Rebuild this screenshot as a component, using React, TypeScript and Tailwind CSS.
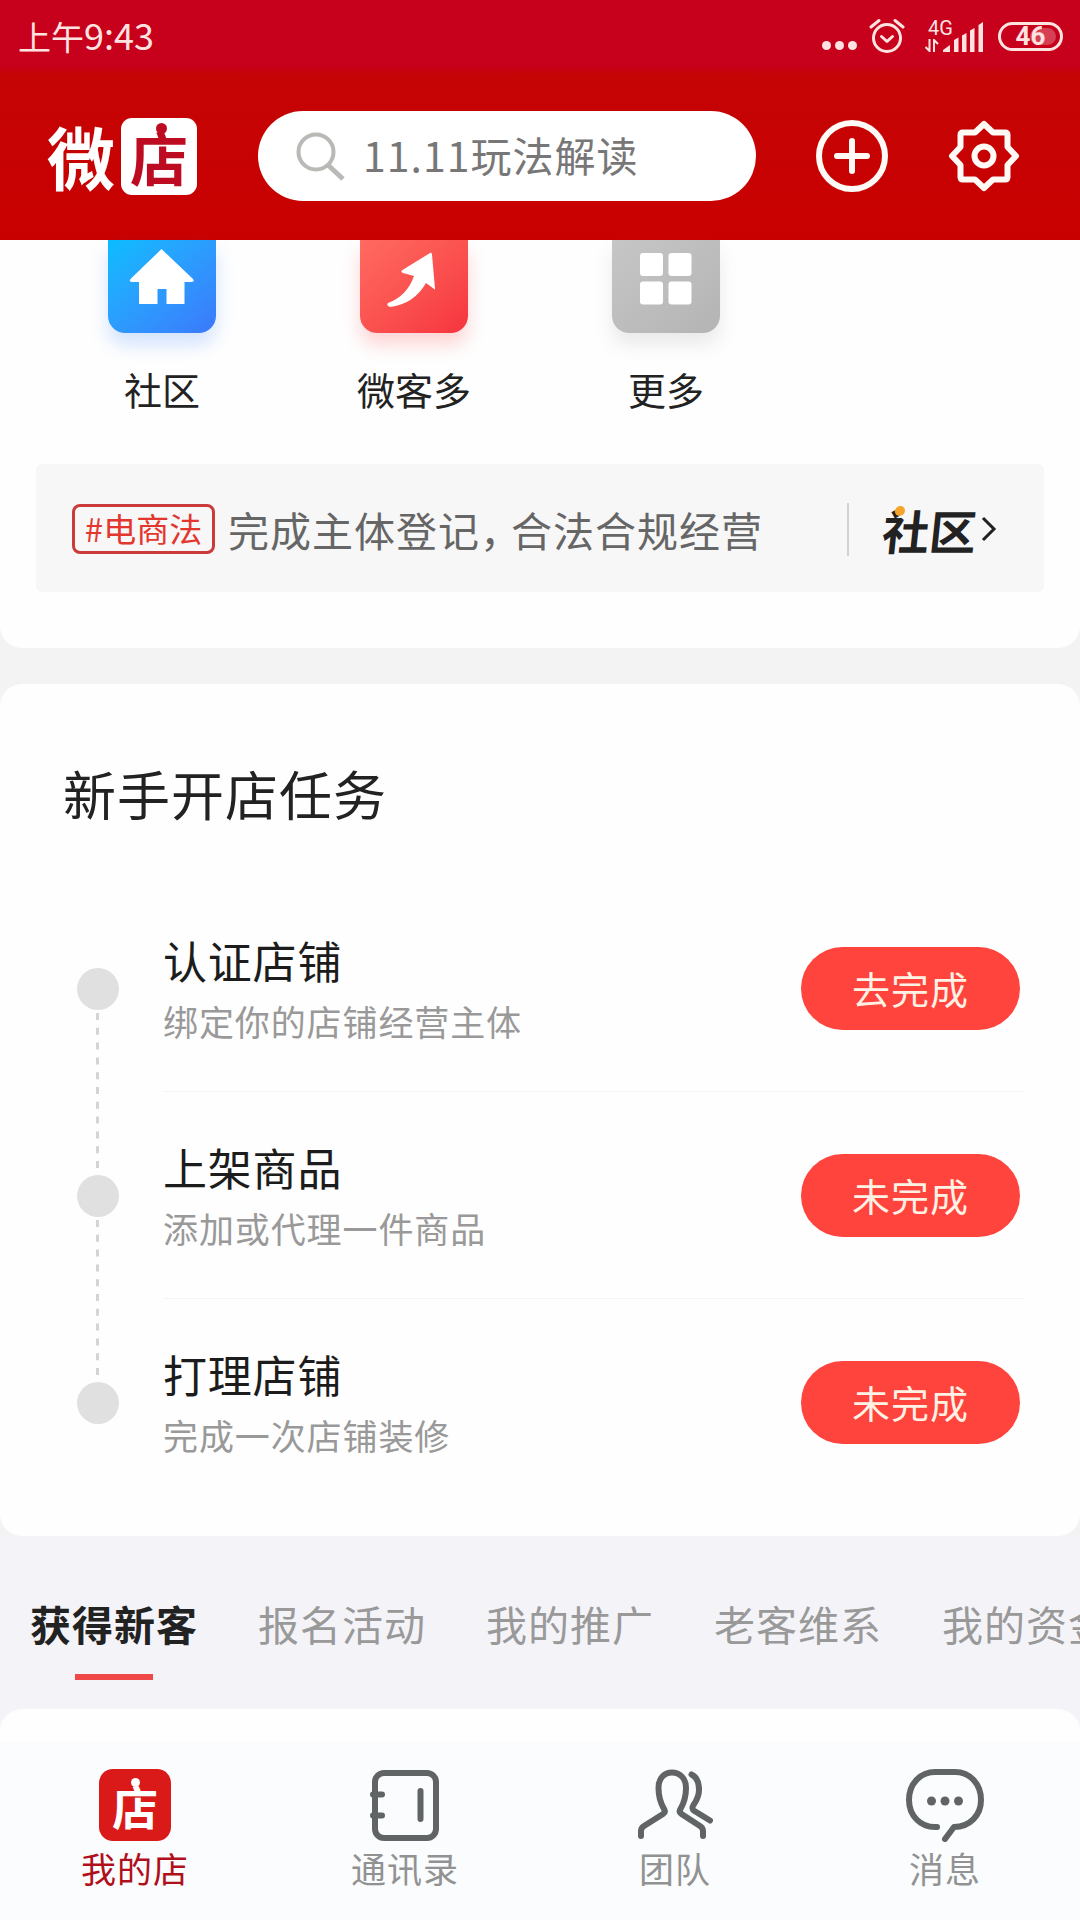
import type { ReactNode } from 'react';
import { clsx } from 'clsx';

interface Task {
  title: string;
  desc: string;
  action: string;
}

const tasks: Task[] = [
  { title: '认证店铺', desc: '绑定你的店铺经营主体', action: '去完成' },
  { title: '上架商品', desc: '添加或代理一件商品', action: '未完成' },
  { title: '打理店铺', desc: '完成一次店铺装修', action: '未完成' },
];

const tabs = ['获得新客', '报名活动', '我的推广', '老客维系', '我的资金'];

function AlarmIcon() {
  return (
    <svg width="36" height="36" viewBox="0 0 36 36" fill="none" stroke="currentColor" strokeWidth="3" strokeLinecap="round" strokeLinejoin="round">
      <circle cx="18" cy="20" r="13.5" />
      <path d="M12.5 18.5l5.5 5 5.5-5" />
      <path d="M2 9l8-6.5M34 9l-8-6.5" />
    </svg>
  );
}

function SignalIcon() {
  return (
    <svg width="40" height="30" viewBox="0 0 40 30" fill="currentColor">
      <path d="M0 30v-2l7-5v7zM11 30V18l4.5-2.5V30zM19 30V13.5l4.5-2.5v19zM27 30V8.5L31.5 6v24zM35.5 30V3L40 0v30z" />
    </svg>
  );
}

function StatusBar() {
  return (
    <div className="flex h-[72px] items-center justify-between pl-[18px] pr-[17px] text-[#ffe3e0]">
      <div className="flex items-baseline pb-[3px] leading-none">
        <span className="text-[33px]">上午</span>
        <span className="text-[36px]">9:43</span>
      </div>
      <div className="flex items-center">
        <div className="mt-[19px] flex gap-[4px]">
          <span className="size-[9px] rounded-full bg-current" />
          <span className="size-[9px] rounded-full bg-current" />
          <span className="size-[9px] rounded-full bg-current" />
        </div>
        <div className="ml-[12px]">
          <AlarmIcon />
        </div>
        <div className="ml-[20px] flex items-end">
          <div className="flex w-[18px] flex-col">
            <span className="h-[18px] pl-[3px] font-['Roboto',sans-serif] text-[20px] leading-[15px]">4G</span>
            <svg width="14" height="13" viewBox="0 0 14 13" fill="none" stroke="currentColor" strokeWidth="2">
              <path d="M4.5 0v12L.5 8M9 13V1l4 4" />
            </svg>
          </div>
          <SignalIcon />
        </div>
        <div className="relative ml-[15px] flex h-[29px] w-[65px] items-center justify-center overflow-hidden rounded-full border-[3px] border-current">
          <span className="absolute inset-y-[3px] right-[4px] w-[26px] rounded-full bg-white/25" />
          <span className="relative font-['Roboto',sans-serif] text-[26px] font-bold leading-none">46</span>
        </div>
      </div>
    </div>
  );
}

function Header() {
  return (
    <header className="h-[240px] shrink-0 bg-linear-to-b from-[#c7001c] from-[27%] via-[#c50405] via-[31%] to-[#c90000]">
      <StatusBar />
      <div className="flex h-[168px] items-center">
        <div className="ml-[47px] flex items-center text-white">
          <span className="w-[74px] text-[68px] font-bold leading-[76px]">微</span>
          <span className="relative flex h-[77px] w-[76px] items-center justify-center rounded-[11px] bg-white text-[58px] font-bold leading-[70px] text-[#bd0c22]">
            店
            <span className="absolute left-[35px] top-[5px] size-[11px] rounded-full bg-[#bd0c22]" />
          </span>
        </div>
        <div className="ml-[61px] flex h-[90px] w-[498px] items-center rounded-full bg-white pl-[37px]">
          <svg width="52" height="52" viewBox="0 0 52 52" fill="none" stroke="#b9b9b6" strokeWidth="4">
            <circle cx="21" cy="22" r="17.5" />
            <path d="M33.5 35.5L48 49" strokeWidth="5" />
          </svg>
          <span className="ml-[16px] pb-[4px] text-[41px] leading-none tracking-[1px] text-[#777]">11.11玩法解读</span>
        </div>
        <svg className="ml-[60px]" width="72" height="72" viewBox="0 0 72 72" fill="none" stroke="#fffaf5" strokeWidth="6" strokeLinecap="round">
          <circle cx="36" cy="36" r="33" />
          <path d="M36 21v30M21 36h30" />
        </svg>
        <svg className="ml-[60px]" width="72" height="72" viewBox="0 0 72 72" fill="none" stroke="#fffaf5" strokeWidth="6" strokeLinejoin="round">
          <path d="M36 4l9 8.500h12q2.500 0 2.500 2.500v12L68 36l-8.500 9v12q0 2.500-2.500 2.500H45L36 68l-9-8.500H15q-2.500 0-2.500-2.500V45L4 36l8.500-9V15q0-2.500 2.500-2.500h12z" />
          <circle cx="36" cy="36" r="9.5" />
        </svg>
      </div>
    </header>
  );
}

function Shortcut({ label, tile, children }: { label: string; tile: string; children: ReactNode }) {
  return (
    <div className="flex w-[252px] flex-col items-center">
      <div className={clsx('h-[93px] w-[108px] rounded-b-[17px]', tile)}>
        <svg width="108" height="93" viewBox="0 0 108 93" fill="#fff">
          {children}
        </svg>
      </div>
      <span className="mt-[35px] text-[38px] leading-[42px] text-[#222]">{label}</span>
    </div>
  );
}

function Shortcuts() {
  return (
    <div className="flex pl-[36px]">
      <Shortcut label="社区" tile="bg-linear-to-br from-[#06bdff] to-[#3b78fb] shadow-[0_12px_18px_rgba(60,130,255,0.22)]">
        <path d="M53.500 9l31 29.500q3 3.500-1 3.500h-7v22H58.500V49h-9v15H31V42h-7q-4 0-1-3.500z" />
      </Shortcut>
      <Shortcut label="微客多" tile="bg-linear-to-br from-[#ff6a61] to-[#f6333e] shadow-[0_12px_18px_rgba(255,70,70,0.22)]">
        <path d="M70 13q2-1 2 1.500l3 34q0 2-1.500 0L66 43Q54 64 30 67q-4-1-2-4 19-7 26-27l-11-3q-3-1-.5-3z" />
      </Shortcut>
      <Shortcut label="更多" tile="bg-linear-to-br from-[#c6c6c6] to-[#b4b4b4] shadow-[0_12px_18px_rgba(120,120,120,0.15)]">
        <rect x="28" y="13" width="23" height="23" rx="3" />
        <rect x="56.5" y="13" width="23" height="23" rx="3" />
        <rect x="28" y="41.5" width="23" height="23" rx="3" />
        <rect x="56.5" y="41.5" width="23" height="23" rx="3" />
      </Shortcut>
    </div>
  );
}

function Notice() {
  return (
    <div className="mx-[36px] mt-[54px] flex h-[128px] items-center rounded-md bg-[#f7f7f7] pl-[36px] pt-[2px]">
      <span className="flex h-[50px] w-[143px] items-center justify-center rounded-[8px] border-[3px] border-[#cb3b3b] pb-[1px] text-[33px] leading-none text-[#e2362f]">
        #电商法
      </span>
      <span className="ml-[13px] w-[619px] whitespace-nowrap text-[41px] leading-none tracking-[1px] text-[#666]">
        完成主体登记<span className="tracking-[-10px]">，</span>合法合规经营
      </span>
      <span className="h-[53px] w-[2px] bg-[#d2d2d2]" />
      <span className="relative ml-[34px] -skew-x-6 text-[47px] font-bold leading-none text-[#222]">
        社区
        <span className="absolute left-[10px] top-0 size-[10px] rounded-full bg-[#f5a32a]" />
      </span>
      <svg className="ml-[4px]" width="16" height="26" viewBox="0 0 16 26" fill="none" stroke="#222" strokeWidth="3">
        <path d="M2 2l11 11L2 24" />
      </svg>
    </div>
  );
}

function TaskRow({ task, last }: { task: Task; last: boolean }) {
  return (
    <div className="flex h-[207px]">
      <div className="flex w-[41px] flex-col items-center pt-[83px]">
        <span className="size-[42px] shrink-0 rounded-full bg-[#e0e0e0]" />
        {!last && (
          <svg className="shrink-0" width="3" height="165" viewBox="0 0 3 165">
            <path d="M1.5 3v160" stroke="#d4d4d4" strokeWidth="3" strokeDasharray="7 7.8" />
          </svg>
        )}
      </div>
      <div className={clsx('ml-[45px] flex w-[861px] justify-between border-b pt-[49px]', last ? 'border-transparent' : 'border-[#f4f4f4]')}>
        <div>
          <h3 className="text-[44px] leading-[52px] tracking-[0.8px] text-[#1c1c1c]">{task.title}</h3>
          <p className="mt-[16px] text-[35px] leading-[38px] tracking-[0.9px] text-[#999]">{task.desc}</p>
        </div>
        <button className="mr-[4px] mt-[13px] h-[83px] w-[219px] rounded-full bg-[#ff433d] pb-[2px] text-[38px] tracking-[1px] text-[#fff1e4]">
          {task.action}
        </button>
      </div>
    </div>
  );
}

function TaskCard() {
  return (
    <section className="h-[852px] shrink-0 rounded-[22px] bg-[#fefefe] pt-[79px]">
      <h2 className="pl-[63px] text-[53px] leading-[60px] tracking-[1px] text-[#222]">新手开店任务</h2>
      <div className="mt-[62px] pl-[77px]">
        {tasks.map((task, i) => (
          <TaskRow key={task.title} task={task} last={i === tasks.length - 1} />
        ))}
      </div>
    </section>
  );
}

function Tabs() {
  return (
    <div className="flex h-[173px] shrink-0 gap-[60px] overflow-hidden pl-[30px]">
      {tabs.map((tab, i) => (
        <div key={tab} className="flex w-[168px] shrink-0 flex-col items-center pt-[60px]">
          <span className={clsx('whitespace-nowrap text-[41px] leading-[54px] tracking-[1px]', i === 0 ? 'font-bold text-[#222]' : 'text-[#999]')}>
            {tab}
          </span>
          {i === 0 && <span className="mt-[24px] h-[6px] w-[78px] bg-[#f04848]" />}
        </div>
      ))}
    </div>
  );
}

function NavItem({ label, active, children }: { label: string; active?: boolean; children: ReactNode }) {
  return (
    <div className="flex w-[270px] flex-col items-center pt-[26px]">
      <div className="flex h-[74px] items-center text-[#616464]">{children}</div>
      <span className={clsx('mt-[6px] text-[35px] leading-[40px] tracking-[1px]', active ? 'text-[#b0101c]' : 'text-[#929292]')}>{label}</span>
    </div>
  );
}

function BottomNav() {
  return (
    <nav className="flex h-[178px] shrink-0 bg-[#fafcfe]">
      <NavItem label="我的店" active>
        <span className="relative flex size-[72px] items-center justify-center rounded-[14px] bg-[#da1919] text-[46px] font-bold leading-none text-white">
          店
          <span className="absolute left-[32px] top-[9px] size-[9px] rounded-full bg-white" />
        </span>
      </NavItem>
      <NavItem label="通讯录">
        <svg width="70" height="72" viewBox="1 0 70 72" fill="none" stroke="currentColor" strokeWidth="6">
          <rect x="6" y="4" width="61" height="65" rx="9" />
          <path d="M4 25.5h9M4 46.5h9M51.500 22v28" strokeLinecap="round" />
        </svg>
      </NavItem>
      <NavItem label="团队">
        <svg width="76" height="72" viewBox="0 0 76 72" fill="none" stroke="currentColor" strokeWidth="6" strokeLinecap="round" strokeLinejoin="round">
          <path d="M4 67v-5q0-3 3-5l19-12q3-2 1-5C23 33 21.500 26 21.500 19c0-10 6-15.500 13.500-15.500S49 9 49 19c0 7-1.500 14-5.500 21q-2 3 1 5L63 57q3 2 3 5v5" />
          <path d="M54.500 5.500c6 3 7.500 8 7.500 15.500 0 6-2 10-5.500 15q-2.500 4 1 6L73 51.500" />
        </svg>
      </NavItem>
      <NavItem label="消息">
        <svg width="80" height="74" viewBox="0 0 80 74" fill="none" stroke="currentColor" strokeWidth="6" strokeLinecap="round" strokeLinejoin="round">
          <path d="M32 59C15 60 4 47 4 32 4 15 16 4 30 4h20c15 0 26 12 26 28 0 15-11 27-27 27l-9 12" />
          <g fill="currentColor" stroke="none">
            <circle cx="26.5" cy="33" r="4.5" />
            <circle cx="40" cy="33" r="4.5" />
            <circle cx="53.5" cy="33" r="4.5" />
          </g>
        </svg>
      </NavItem>
    </nav>
  );
}

export default function App() {
  return (
    <div className="flex h-[1920px] w-[1080px] flex-col overflow-hidden bg-[#f4f3f8] font-['Noto_Sans_CJK_SC',sans-serif]">
      <Header />
      <div className="flex shrink-0 flex-col gap-[36px] bg-[#f3f3f3]">
        <section className="h-[408px] rounded-b-[22px] bg-[#fefefe]">
          <Shortcuts />
          <Notice />
        </section>
        <TaskCard />
      </div>
      <Tabs />
      <div className="h-[33px] shrink-0 rounded-t-[22px] bg-[#fefefe]" />
      <BottomNav />
    </div>
  );
}
